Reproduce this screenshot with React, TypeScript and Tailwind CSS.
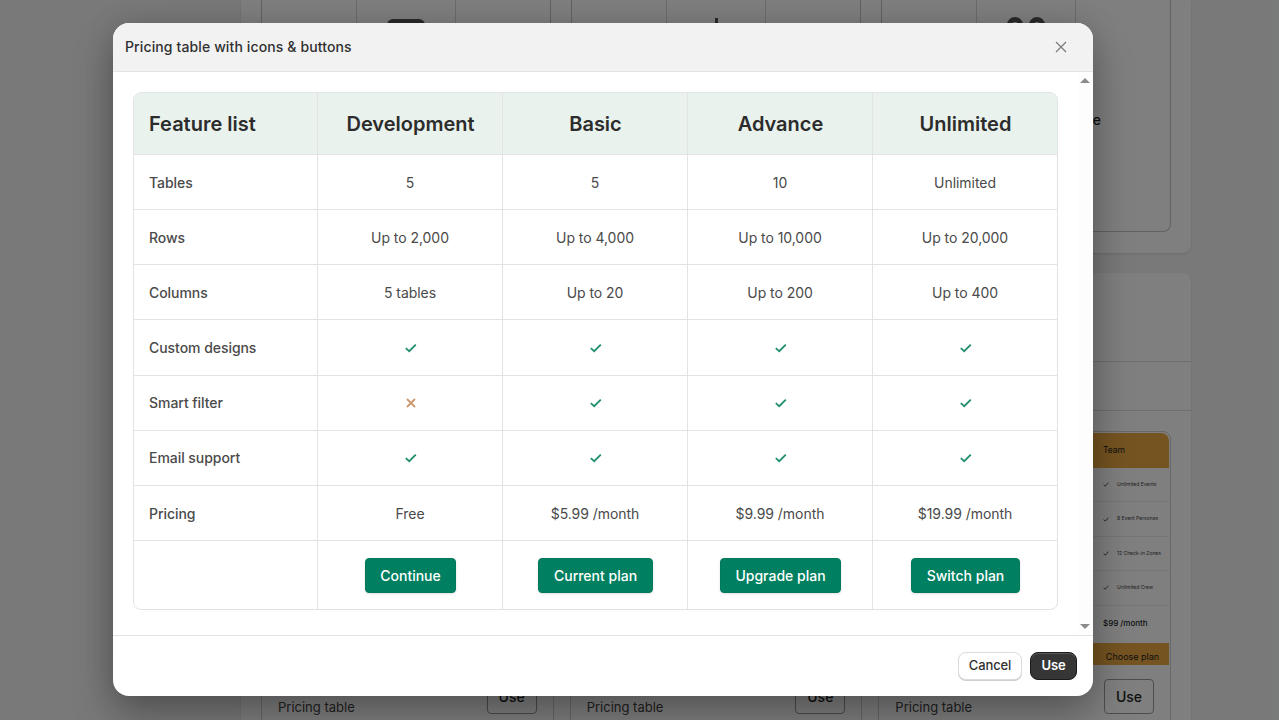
import React from "react";

const font = "font-[Inter,'Noto_Sans',sans-serif]";

function Check() {
  return (
    <svg width="14" height="12" viewBox="0 0 14 12" fill="none" className="block ml-[2px]">
      <path d="M1.8 6.2 L5.2 9.2 L11.8 2.6" stroke="#1f8f6d" strokeWidth="1.8" />
    </svg>
  );
}

function Cross() {
  return (
    <svg width="10" height="10" viewBox="0 0 10 10" fill="none" className="block ml-[1px]">
      <path d="M1 1 L9 9 M9 1 L1 9" stroke="#cd9a70" strokeWidth="1.9" />
    </svg>
  );
}

function SmallCheck() {
  return (
    <svg width="6" height="5" viewBox="0 0 7 6" fill="none" className="block shrink-0">
      <path d="M0.6 3 L2.6 5 L6.4 0.8" stroke="#222" strokeWidth="0.9" />
    </svg>
  );
}

const rows: { label: string; cells: (string | "check" | "cross")[] }[] = [
  { label: "Tables", cells: ["5", "5", "10", "Unlimited"] },
  { label: "Rows", cells: ["Up to 2,000", "Up to 4,000", "Up to 10,000", "Up to 20,000"] },
  { label: "Columns", cells: ["5 tables", "Up to 20", "Up to 200", "Up to 400"] },
  { label: "Custom designs", cells: ["check", "check", "check", "check"] },
  { label: "Smart filter", cells: ["cross", "check", "check", "check"] },
  { label: "Email support", cells: ["check", "check", "check", "check"] },
  { label: "Pricing", cells: ["Free", "$5.99 /month", "$9.99 /month", "$19.99 /month"] },
];

function TopTemplate({ icon, tail }: { icon: React.ReactNode; tail?: string }) {
  return (
    <div className="h-[232px] rounded-b-lg border border-t-0 border-[#c4c4c4] grid grid-cols-[95px_99px_minmax(0,1fr)]">
      <div className="border-r border-[#d8d8d8]" />
      <div className="border-r border-[#d8d8d8] flex justify-center pt-[17px]">{icon}</div>
      <div className="min-w-0 flex justify-end items-start pt-[110px] pr-[69px] text-sm font-medium text-[#222]">{tail}</div>
    </div>
  );
}

function LowerTemplate({ children }: { children?: React.ReactNode }) {
  return (
    <div className="h-[320px] rounded-t-lg border border-[#d0d0d0] flex flex-col">
      <div className="h-[247px] pl-[16px] flex justify-end">{children}</div>
      <div className="flex justify-between pl-4 pr-4 h-[60px] items-start">
        <span className="mt-[19px] text-[13px] text-[#444]">Pricing table</span>
        <span className="w-[50px] h-[35px] rounded border border-[#9a9a9a] flex items-center justify-center text-sm font-medium text-[#222]">
          Use
        </span>
      </div>
    </div>
  );
}

function TeamColumn() {
  const items = ["Unlimited Events", "8 Event Personas", "12 Check-in Zones", "Unlimited Crew"];
  return (
    <div className="w-[76px] flex flex-col mr-[1px] mt-[1px]">
      <div className="h-[35px] bg-[#eba842] rounded-tr-lg flex items-center pl-[10px] pb-[1px] text-[8.5px] text-[#222]">Team</div>
      {items.map((t) => (
        <div key={t} className="h-[34.4px] border-b border-[#ececec] flex items-center gap-[8px] pl-[10px] text-[5px] whitespace-nowrap text-[#444]">
          <SmallCheck />
          {t}
        </div>
      ))}
      <div className="h-[34.4px] flex items-center pl-[10px] text-[8px] font-medium whitespace-nowrap text-[#222]">$99 /month</div>
      <div className="h-[22px] mt-[3.5px] bg-[#eba842] flex items-center justify-center pt-[4px] text-[9px] whitespace-nowrap text-[#222]">
        <span className="ml-[3px]">Choose plan</span>
      </div>
    </div>
  );
}

function Background() {
  return (
    <div className="ml-[241px] w-[950px]">
      <div className="h-[253px] rounded-b-lg bg-white shadow-sm px-5 grid grid-cols-3 gap-5">
        <TopTemplate icon={<div className="w-[38px] h-[6px] mt-[2px] rounded-t-md bg-[#555]" />} />
        <TopTemplate icon={<div className="w-[3px] h-[8px] mt-[1px] bg-[#555]" />} />
        <TopTemplate
          tail="Free"
          icon={
            <div className="flex gap-[6px]">
              <div className="w-[16px] h-[16px] rounded-full border-[5px] border-[#555]" />
              <div className="w-[16px] h-[16px] rounded-full border-[5px] border-[#555]" />
            </div>
          }
        />
      </div>
      <div className="mt-5 rounded-t-lg bg-white shadow-sm">
        <div className="h-[89px] border-b border-[#dcdcdc]" />
        <div className="h-[49px] border-b border-[#dcdcdc]" />
        <div className="px-5 pt-5 grid grid-cols-3 gap-4">
          <LowerTemplate />
          <LowerTemplate />
          <LowerTemplate>
            <TeamColumn />
          </LowerTemplate>
        </div>
      </div>
    </div>
  );
}

function Arrow({ up }: { up?: boolean }) {
  return (
    <svg width="10" height="5" viewBox="0 0 10 5" className="block">
      <path d={up ? "M5 0 L10 5 L0 5 Z" : "M0 0 L10 0 L5 5 Z"} fill="#8c8c8c" />
    </svg>
  );
}

function PricingTable() {
  const cellB = "border-b border-[#e1e3e5]";
  const cellR = "border-r border-[#e1e3e5]";
  return (
    <div className="rounded-lg border border-[#dfe3e8] overflow-hidden grid grid-cols-[184px_185px_185px_185px_184px]">
      {["Feature list", "Development", "Basic", "Advance", "Unlimited"].map((h, i) => (
        <div
          key={h}
          className={`h-[62px] bg-[#e9f2ec] flex items-center text-xl font-semibold text-[#2c2c2c] ${cellB} ${i < 4 ? cellR : ""} ${i === 0 ? "pl-[15px]" : "justify-center pl-[1px]"}`}
        >
          {h}
        </div>
      ))}
      {rows.map((row) => (
        <React.Fragment key={row.label}>
          <div className={`h-[55.14px] flex items-center pl-[15px] pt-[1.4px] text-sm font-medium tracking-[-0.05px] text-[#4a4a4a] ${cellB} ${cellR}`}>
            {row.label}
          </div>
          {row.cells.map((c, i) => (
            <div
              key={i}
              className={`h-[55.14px] flex items-center justify-center pt-[1.4px] text-sm tracking-[-0.05px] text-[#4a4a4a] ${cellB} ${i < 3 ? cellR : ""}`}
            >
              {c === "check" ? <Check /> : c === "cross" ? <Cross /> : c}
            </div>
          ))}
        </React.Fragment>
      ))}
      <div className={`h-[68px] ${cellR}`} />
      {["Continue", "Current plan", "Upgrade plan", "Switch plan"].map((b, i) => (
        <div key={b} className={`h-[68px] flex items-center justify-center pt-[1px] pl-[1px] ${i < 3 ? cellR : ""}`}>
          <button className="h-[35px] px-[14.5px] pt-[1px] rounded bg-[#008060] border border-[#007a5b] text-white text-sm font-medium shadow-sm">
            {b}
          </button>
        </div>
      ))}
    </div>
  );
}

function Modal() {
  return (
    <div className="w-[980px] h-[673px] rounded-2xl bg-white overflow-hidden flex flex-col shadow-[0_20px_40px_rgba(0,0,0,0.28),0_0_30px_rgba(0,0,0,0.12)]">
      <div className="h-[49px] shrink-0 bg-[#f2f2f2] border-b border-[#e3e3e3] flex items-center justify-between pl-3 pr-[26px]">
        <span className="text-sm font-medium tracking-[0.12px] text-[#303030]">Pricing table with icons &amp; buttons</span>
        <svg width="12" height="12" viewBox="0 0 12 12" fill="none" className="block">
          <path d="M1 1 L11 11 M11 1 L1 11" stroke="#7a7a7a" strokeWidth="1.2" />
        </svg>
      </div>
      <div className="flex-1 flex min-h-0 border-b border-[#e3e3e3]">
        <div className="flex-1 pt-5 pl-5 pr-5">
          <PricingTable />
        </div>
        <div className="w-[15px] shrink-0 bg-[#fdfdfd] flex flex-col items-center justify-between pt-[6px] pb-[6px] pr-[1px]">
          <Arrow up />
          <Arrow />
        </div>
      </div>
      <div className="h-[60px] shrink-0 flex items-center justify-end gap-2 pr-4">
        <button className="h-[28px] w-[64px] rounded-lg bg-white border border-[#dcdcdc] shadow-[0_1px_0_#cfcfcf] text-[13px] font-medium tracking-[-0.1px] text-[#303030]">
          Cancel
        </button>
        <button className="h-[28px] w-[47px] rounded-lg bg-[#363636] border border-[#1a1a1a] shadow-[inset_0_1px_0_#5a5a5a] text-[13px] font-semibold tracking-[-0.1px] text-white">
          Use
        </button>
      </div>
    </div>
  );
}

export default function App() {
  return (
    <div className={`relative h-screen overflow-hidden bg-[#f2f3f3] ${font}`}>
      <Background />
      <div className="absolute inset-0 bg-black/50 flex items-start pt-[23px] pl-[113px]">
        <Modal />
      </div>
    </div>
  );
}
